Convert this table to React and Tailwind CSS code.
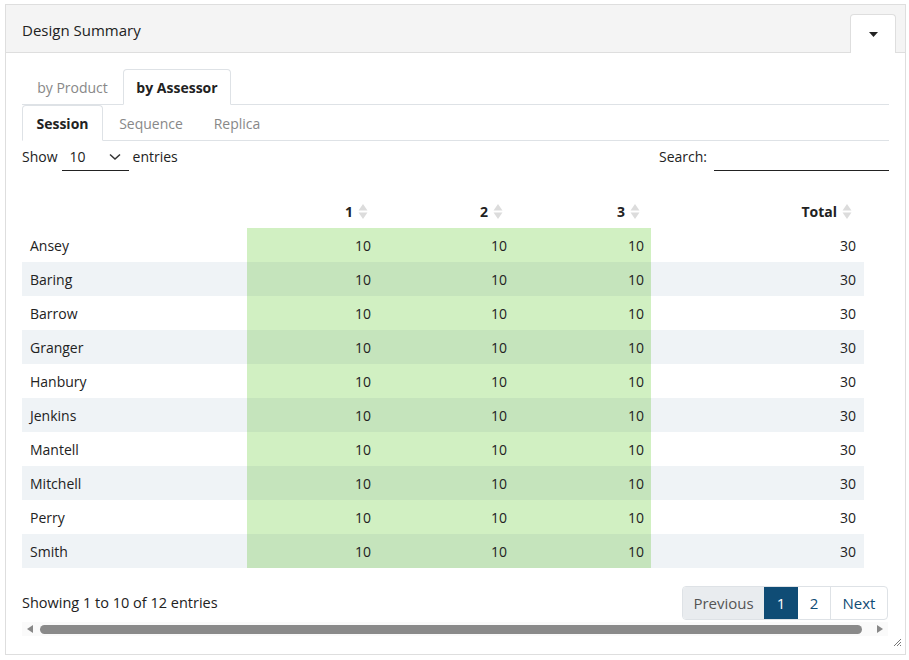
import { useState } from "react"

const rows = ["Ansey", "Baring", "Barrow", "Granger", "Hanbury", "Jenkins", "Mantell", "Mitchell", "Perry", "Smith"]

const SortIcon = () => (
  <svg width="10" height="17" viewBox="0 0 10 17" className="ml-[5px] inline-block">
    <path d="M5 1 L9.5 7.5 L0.5 7.5 Z" fill="#dcdcdc" />
    <path d="M5 16 L9.5 9.5 L0.5 9.5 Z" fill="#dcdcdc" />
  </svg>
)

const Head = ({ label, className }) => (
  <th className={`h-[34px] text-right font-bold text-[#222] ${className}`}>
    <span className="inline-flex items-center">
      {label}
      <SortIcon />
    </span>
  </th>
)

export default function App() {
  const [tab, setTab] = useState("assessor")
  const [sub, setSub] = useState("session")

  return (
    <div className="h-[660px] w-[909px] bg-white pl-[5px] pt-[4px] text-[14px] text-[#222] [font-family:'Open_Sans',sans-serif]">
      <div className="h-[651px] w-[901px] border border-[#dedede]">
        {/* header */}
        <div className="flex h-[48px] items-end justify-between border-b border-[#dedede] bg-[#f4f4f4]">
          <div className="self-center pl-[16px] pt-[3px] text-[15px] text-[#222]">Design Summary</div>
          <div className="mr-[9px] flex h-[39px] w-[46px] translate-y-px items-center justify-center rounded-t-[4px] border border-b-0 border-[#dedede] bg-white">
            <svg width="9" height="5" viewBox="0 0 9 5">
              <path d="M0 0 L9 0 L4.5 5 Z" fill="#222" />
            </svg>
          </div>
        </div>

        <div className="px-[16px] pt-[16px]">
          {/* main tabs */}
          <div className="flex h-[36px] border-b border-[#dee2e6]">
            <button
              onClick={() => setTab("product")}
              className={`-mb-px w-[101px] text-[14px] ${tab === "product" ? "rounded-t-[4px] border border-b-white border-[#dee2e6] bg-white font-bold text-[#222]" : "text-[#888]"}`}
            >
              by Product
            </button>
            <button
              onClick={() => setTab("assessor")}
              className={`-mb-px w-[108px] text-[14px] ${tab === "assessor" ? "rounded-t-[4px] border border-b-white border-[#dee2e6] bg-white font-bold text-[#222]" : "text-[#888]"}`}
            >
              by Assessor
            </button>
          </div>

          {/* sub tabs */}
          <div className="flex h-[36px] border-b border-[#dee2e6]">
            {[
              ["session", "Session", "w-[81px]"],
              ["sequence", "Sequence", "w-[96px]"],
              ["replica", "Replica", "w-[76px]"],
            ].map(([key, label, w]) => (
              <button
                key={key}
                onClick={() => setSub(key)}
                className={`-mb-px text-[14px] ${w} ${sub === key ? "rounded-t-[4px] border border-b-white border-[#dee2e6] bg-white font-bold text-[#222]" : "text-[#888]"}`}
              >
                {label}
              </button>
            ))}
          </div>

          {/* controls */}
          <div className="flex h-[30px] items-center justify-between">
            <div className="flex items-center">
              <span>Show</span>
              <div className="mx-[4px] flex h-[30px] w-[67px] items-center justify-between border-b border-[#222] px-[8px] pt-[2px]">
                <span>10</span>
                <svg width="12" height="8" viewBox="0 0 12 8">
                  <path d="M1 1.5 L6 6 L11 1.5" fill="none" stroke="#333" strokeWidth="1.5" />
                </svg>
              </div>
              <span>entries</span>
            </div>
            <div className="flex items-center">
              <span>Search:</span>
              <div className="ml-[7px] h-[30px] w-[175px] border-b border-[#222]" />
            </div>
          </div>

          {/* table */}
          <table className="mt-[23px] w-[842px] border-collapse text-[14px]">
            <thead>
              <tr>
                <th className="h-[34px] w-[225px]" />
                <Head label="1" className="w-[136px] pr-[15px]" />
                <Head label="2" className="w-[134px] pr-[14px]" />
                <Head label="3" className="w-[134px] pr-[11px]" />
                <Head label="Total" className="pr-[12px]" />
              </tr>
            </thead>
            <tbody>
              {rows.map((name, i) => {
                const odd = i % 2 === 1
                const green = odd ? "bg-[#c5e4bc]" : "bg-[#d1f0c2]"
                return (
                  <tr key={name} className={odd ? "bg-[#eff3f6]" : "bg-white"}>
                    <td className="h-[34px] pl-[8px]">{name}</td>
                    <td className={`pr-[12px] text-right ${green}`}>10</td>
                    <td className={`pr-[10px] text-right ${green}`}>10</td>
                    <td className={`pr-[7px] text-right ${green}`}>10</td>
                    <td className="pr-[8px] text-right">30</td>
                  </tr>
                )
              })}
            </tbody>
          </table>

          {/* footer */}
          <div className="mt-[18px] flex items-center justify-between pr-[1px]">
            <span className="text-[14.5px]">Showing 1 to 10 of 12 entries</span>
            <div className="flex h-[34px] overflow-hidden rounded-[4px] border border-[#dee2e6] text-[15px]">
              <span className="flex w-[81px] items-center justify-center bg-[#e9ecef] text-[#555]">Previous</span>
              <span className="flex w-[34px] items-center justify-center bg-[#0f4c75] text-white">1</span>
              <span className="flex w-[33px] items-center justify-center border-r border-[#dee2e6] text-[#0f4c75]">2</span>
              <span className="flex w-[56px] items-center justify-center text-[#0f4c75]">Next</span>
            </div>
          </div>

          {/* scrollbar */}
          <div className="mt-[2px] flex h-[14px] w-[866px] items-center bg-[#fafafa] px-[4px]">
            <svg width="8" height="8" viewBox="0 0 8 8">
              <path d="M7 0 L7 8 L1 4 Z" fill="#888" />
            </svg>
            <div className="ml-[6px] h-[9px] flex-1 rounded-full bg-[#8a8a8a]" />
            <svg width="8" height="8" viewBox="0 0 8 8" className="ml-[14px]">
              <path d="M1 0 L1 8 L7 4 Z" fill="#888" />
            </svg>
          </div>
        </div>

        <div className="flex justify-end pr-[3px] pt-[2px]">
          <svg width="9" height="9" viewBox="0 0 9 9">
            <path d="M8 1 L1 8 M8 4 L4 8 M8 7 L7 8" stroke="#777" strokeWidth="1" />
          </svg>
        </div>
      </div>
    </div>
  )
}
